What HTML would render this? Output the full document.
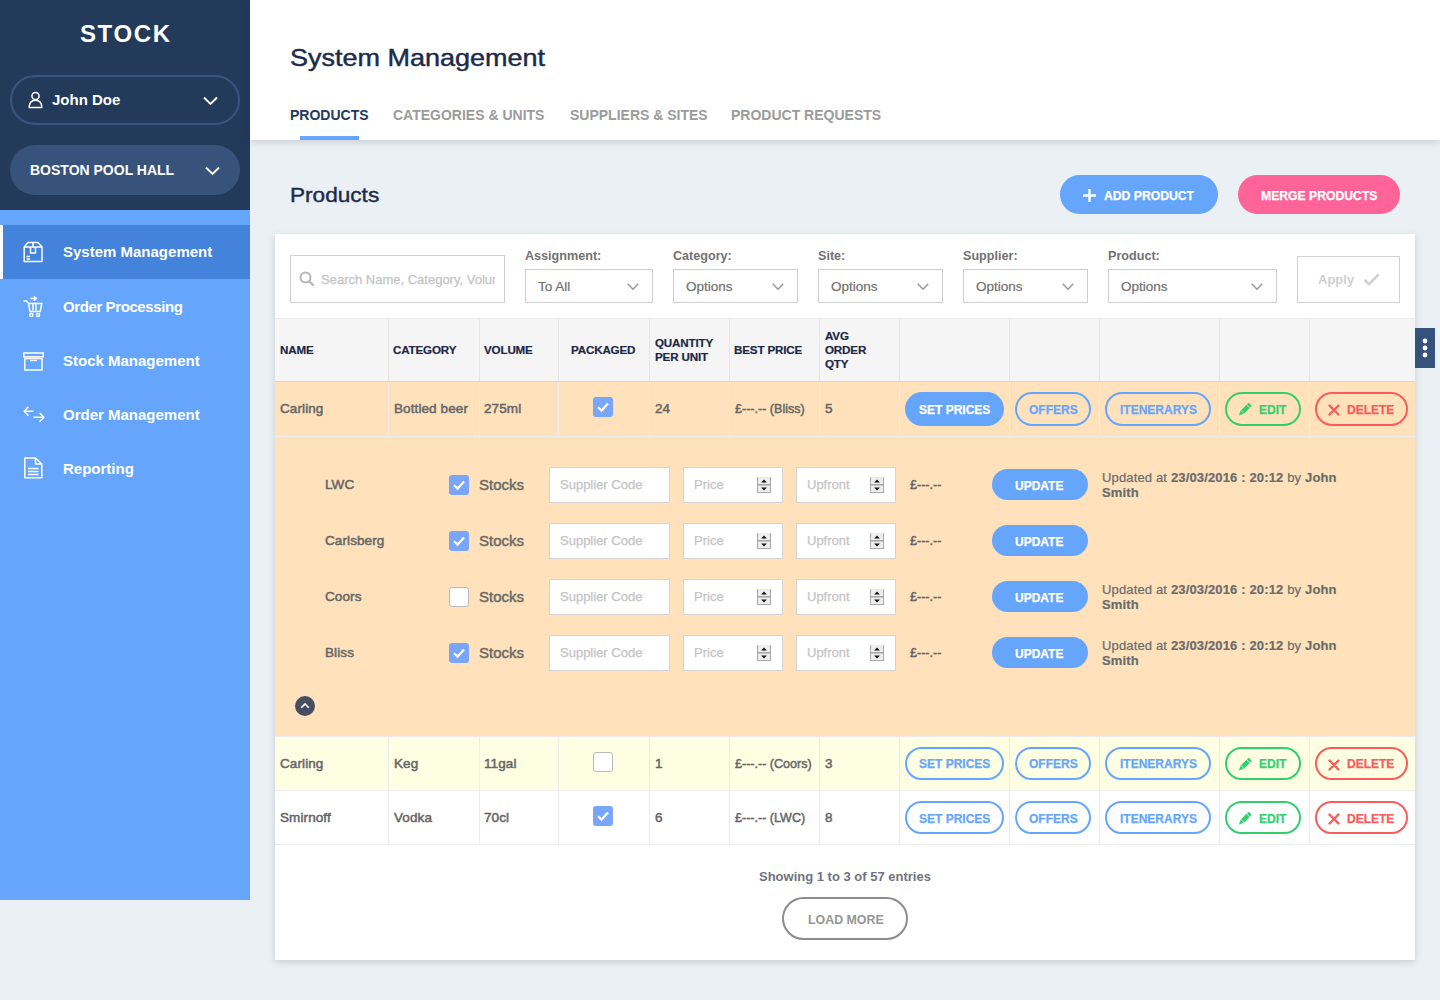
<!DOCTYPE html>
<html><head><meta charset="utf-8">
<style>
*{box-sizing:border-box;margin:0;padding:0}
html,body{width:1440px;height:1000px;overflow:hidden;background:#ebf0f5;font-family:"Liberation Sans",sans-serif}
.a{position:absolute}
.t{position:absolute;line-height:1;white-space:nowrap}
.b{font-weight:bold}
.pill{border-radius:25px}
.nav{color:#fff;font-size:15px;font-weight:bold}
.tab{font-size:14px;font-weight:bold;color:#9b9b9b}
.lbl{font-size:13px;font-weight:bold;color:#727272}
.sel{position:absolute;border:1px solid #cfcfcf;background:#fff;height:34px;top:269px}
.opt{font-size:13.5px;color:#707070;-webkit-text-stroke:0.2px #707070}
.th{font-size:11.6px;font-weight:bold;color:#1c2746;letter-spacing:-0.15px;-webkit-text-stroke:0.2px #1c2746}
.vl{position:absolute;width:1px}
.rt{font-size:13.5px;color:#666;-webkit-text-stroke:0.5px #666;letter-spacing:0.1px}
.pr{letter-spacing:0;transform:scaleX(0.93);transform-origin:0 0}
.ob{position:absolute;border:2px solid #65a6fc;border-radius:17px}
.bt{font-size:12px;font-weight:bold;-webkit-text-stroke:0.25px currentColor}
.inp{position:absolute;background:#fff;border:1px solid #d3d3d3;height:36px}
.ph{font-size:13px;color:#c4c4c4;-webkit-text-stroke:0.25px #c4c4c4}
.spin{position:absolute;width:14px;height:17px;background:#ececec;border:1px solid #a9a9a9}
.upd{position:absolute;width:270px;font-size:13px;line-height:15px;color:#6b6b6b;-webkit-text-stroke:0.2px #6b6b6b;letter-spacing:0.15px}
</style></head>
<body>
<div class="a" style="left:0;top:0;width:250px;height:900px;background:#65a6fc"></div>
<div class="a" style="left:0;top:0;width:250px;height:210px;background:#243a5b"></div>
<div class="t b" style="left:80px;top:21.7px;font-size:24px;letter-spacing:1.6px;color:#fff">STOCK</div>
<div class="a pill" style="left:10px;top:75px;width:230px;height:50px;border:2px solid #3a557e"></div>
<div class="t b" style="left:52px;top:92.3px;font-size:15px;color:#fff">John Doe</div>
<div class="a pill" style="left:10px;top:145px;width:230px;height:50px;background:#37537b"></div>
<div class="t b" style="left:30px;top:162.9px;font-size:14px;color:#fff">BOSTON POOL HALL</div>
<svg class="a" style="left:28px;top:91px" width="15" height="18" viewBox="0 0 15 18"><circle cx="7.5" cy="5" r="3.6" fill="none" stroke="#fff" stroke-width="1.5"/><path d="M1.2 16.6 C1.2 11.5 3.8 9.2 7.5 9.2 C11.2 9.2 13.8 11.5 13.8 16.6 Z" fill="none" stroke="#fff" stroke-width="1.5" stroke-linejoin="round"/></svg>
<svg class="a" style="left:203px;top:96px" width="15" height="10" viewBox="0 0 15 10"><path d="M1 1.5 L7.5 8 L14 1.5" fill="none" stroke="#fff" stroke-width="1.9"/></svg>
<svg class="a" style="left:205px;top:166px" width="15" height="10" viewBox="0 0 15 10"><path d="M1 1.5 L7.5 8 L14 1.5" fill="none" stroke="#fff" stroke-width="1.9"/></svg>
<div class="a" style="left:0;top:225px;width:250px;height:54px;background:#4483dc"></div>
<div class="a" style="left:0;top:225px;width:3px;height:54px;background:#fff"></div>
<div class="t nav" style="left:63px;top:244.0px;font-size:15px;letter-spacing:0">System Management</div>
<div class="t nav" style="left:63px;top:298.5px;font-size:15px;letter-spacing:-0.4px">Order Processing</div>
<div class="t nav" style="left:63px;top:352.5px;font-size:15px;letter-spacing:0">Stock Management</div>
<div class="t nav" style="left:63px;top:406.5px;font-size:15px;letter-spacing:0">Order Management</div>
<div class="t nav" style="left:63px;top:460.5px;font-size:15px;letter-spacing:0">Reporting</div>
<svg class="a" style="left:23px;top:241px" width="20" height="22" viewBox="0 0 20 22"><g fill="none" stroke="#fff" stroke-width="1.5" stroke-linejoin="round"><path d="M5 1.5 H15 L19 6 V20.5 H1.2 V6 Z"/><path d="M1.2 6 H19"/><path d="M10 1.5 V6"/><path d="M7.5 6 V12 H12.5 V6"/></g><path d="M3.5 15.5 H7 M3.5 18 H7" stroke="#fff" stroke-width="1.3"/></svg>
<svg class="a" style="left:23px;top:296px" width="21" height="22" viewBox="0 0 21 22"><g fill="none" stroke="#fff" stroke-width="1.5" stroke-linejoin="round" stroke-linecap="round"><path d="M1 5 H3.5 L5.5 7.5 L7 15.5 H17.2 L18.8 7.5 H5.5"/><path d="M10 8.5 V14 M13 8.5 V14"/><circle cx="8.3" cy="19" r="1.6"/><circle cx="15" cy="19" r="1.6"/><path d="M8 2.5 H13.5 M11.3 0.8 L13.6 2.5 L11.3 4.2"/></g></svg>
<svg class="a" style="left:23px;top:352px" width="21" height="19" viewBox="0 0 21 19"><g fill="none" stroke="#fff" stroke-width="1.5"><rect x="0.8" y="1" width="19.4" height="3.8"/><rect x="1.8" y="6.5" width="17.2" height="11.5"/></g><path d="M7 8.5 H14" stroke="#fff" stroke-width="1.4"/></svg>
<svg class="a" style="left:23px;top:406px" width="22" height="17" viewBox="0 0 22 17"><g fill="none" stroke="#fff" stroke-width="1.5" stroke-linecap="round" stroke-linejoin="round"><path d="M1.2 5.2 H10 M5 1.2 L1.2 5.2 L5 9.2"/><path d="M11 11.2 H20.8 M17 7.2 L20.8 11.2 L17 15.2"/></g></svg>
<svg class="a" style="left:23px;top:457px" width="20" height="22" viewBox="0 0 20 22"><g fill="none" stroke="#fff" stroke-width="1.5" stroke-linejoin="round"><path d="M1.8 1 H12.5 L18.8 7 V20.8 H1.8 Z"/><path d="M12.5 1 V7 H18.8"/></g><path d="M5 11.5 H15.5 M5 14.5 H15.5 M5 17.5 H15.5" stroke="#fff" stroke-width="1.4"/></svg>
<div class="a" style="left:250px;top:0;width:1190px;height:140px;background:#fff;box-shadow:0 2px 8px rgba(0,0,0,.15)"></div>
<div class="t " style="left:290px;top:46.1px;font-size:24px;transform:scaleX(1.125);transform-origin:0 0;color:#1d2b4a;-webkit-text-stroke:0.45px #1d2b4a">System Management</div>
<div class="t tab" style="left:290px;top:108.1px;font-size:14px;color:#233a5a">PRODUCTS</div>
<div class="a" style="left:300px;top:136px;width:59px;height:4px;background:#65a6fc"></div>
<div class="t tab" style="left:393px;top:108.1px;font-size:14px;">CATEGORIES &amp; UNITS</div>
<div class="t tab" style="left:570px;top:108.1px;font-size:14px;">SUPPLIERS &amp; SITES</div>
<div class="t tab" style="left:731px;top:108.1px;font-size:14px;">PRODUCT REQUESTS</div>
<div class="t " style="left:290px;top:185.1px;font-size:20px;transform:scaleX(1.13);transform-origin:0 0;color:#1d2b4a;-webkit-text-stroke:0.4px #1d2b4a">Products</div>
<div class="a" style="left:1060px;top:175px;width:158px;height:39px;border-radius:20px;background:#65a6fc"></div>
<svg class="a" style="left:1083px;top:189px" width="13" height="13" viewBox="0 0 13 13"><path d="M6.5 0 V13 M0 6.5 H13" stroke="#fff" stroke-width="2.4"/></svg>
<div class="t bt" style="left:1104px;top:190.3px;font-size:12.2px;color:#fff">ADD PRODUCT</div>
<div class="a" style="left:1238px;top:175px;width:162px;height:39px;border-radius:20px;background:#fe6497"></div>
<div class="t bt" style="left:1261px;top:190.3px;font-size:12.2px;color:#fff">MERGE PRODUCTS</div>
<div class="a" style="left:275px;top:234px;width:1140px;height:726px;background:#fff;box-shadow:0 2px 7px rgba(0,0,0,.15)"></div>
<div class="a" style="left:290px;top:255px;width:215px;height:48px;border:1px solid #cfcfcf"></div>
<svg class="a" style="left:299px;top:271px" width="16" height="16" viewBox="0 0 16 16"><circle cx="6.5" cy="6.5" r="5" fill="none" stroke="#b5b5b5" stroke-width="2"/><path d="M10.2 10.2 L14.2 14.2" stroke="#b5b5b5" stroke-width="2.2" stroke-linecap="round"/></svg>
<div class="a" style="left:321px;top:272px;width:174px;height:18px;overflow:hidden"><div class="t ph" style="left:0;top:1px">Search Name, Category, Volume</div></div>
<div class="t lbl" style="left:525px;top:249.7px;font-size:12.6px;">Assignment:</div>
<div class="sel" style="left:525px;width:128px"></div>
<div class="t opt" style="left:538px;top:279.9px;font-size:13.5px;">To All</div>
<svg class="a" style="left:627px;top:283px" width="12" height="7" viewBox="0 0 12 7"><path d="M0.75 0.75 L6.0 6.25 L11.25 0.75" fill="none" stroke="#9a9a9a" stroke-width="1.5"/></svg>
<div class="t lbl" style="left:673px;top:249.7px;font-size:12.6px;">Category:</div>
<div class="sel" style="left:673px;width:125px"></div>
<div class="t opt" style="left:686px;top:279.9px;font-size:13.5px;">Options</div>
<svg class="a" style="left:772px;top:283px" width="12" height="7" viewBox="0 0 12 7"><path d="M0.75 0.75 L6.0 6.25 L11.25 0.75" fill="none" stroke="#9a9a9a" stroke-width="1.5"/></svg>
<div class="t lbl" style="left:818px;top:249.7px;font-size:12.6px;">Site:</div>
<div class="sel" style="left:818px;width:125px"></div>
<div class="t opt" style="left:831px;top:279.9px;font-size:13.5px;">Options</div>
<svg class="a" style="left:917px;top:283px" width="12" height="7" viewBox="0 0 12 7"><path d="M0.75 0.75 L6.0 6.25 L11.25 0.75" fill="none" stroke="#9a9a9a" stroke-width="1.5"/></svg>
<div class="t lbl" style="left:963px;top:249.7px;font-size:12.6px;">Supplier:</div>
<div class="sel" style="left:963px;width:125px"></div>
<div class="t opt" style="left:976px;top:279.9px;font-size:13.5px;">Options</div>
<svg class="a" style="left:1062px;top:283px" width="12" height="7" viewBox="0 0 12 7"><path d="M0.75 0.75 L6.0 6.25 L11.25 0.75" fill="none" stroke="#9a9a9a" stroke-width="1.5"/></svg>
<div class="t lbl" style="left:1108px;top:249.7px;font-size:12.6px;">Product:</div>
<div class="sel" style="left:1108px;width:169px"></div>
<div class="t opt" style="left:1121px;top:279.9px;font-size:13.5px;">Options</div>
<svg class="a" style="left:1251px;top:283px" width="12" height="7" viewBox="0 0 12 7"><path d="M0.75 0.75 L6.0 6.25 L11.25 0.75" fill="none" stroke="#9a9a9a" stroke-width="1.5"/></svg>
<div class="a" style="left:1297px;top:256px;width:103px;height:47px;border:1px solid #d2d2d2"></div>
<div class="t b" style="left:1318px;top:273.2px;font-size:13px;color:#d0d0d0">Apply</div>
<svg class="a" style="left:1363px;top:273px" width="17" height="13" viewBox="0 0 17 13"><path d="M1.5 7 L6 11.2 L15.5 1.5" fill="none" stroke="#d0d0d0" stroke-width="2.6"/></svg>
<div class="a" style="left:275px;top:318px;width:1140px;height:63px;background:#f5f5f5;border-top:1px solid #ededed"></div>
<div class="vl" style="left:388px;top:319px;height:62px;background:#e6e6e6"></div>
<div class="vl" style="left:479px;top:319px;height:62px;background:#e6e6e6"></div>
<div class="vl" style="left:558px;top:319px;height:62px;background:#e6e6e6"></div>
<div class="vl" style="left:649px;top:319px;height:62px;background:#e6e6e6"></div>
<div class="vl" style="left:729px;top:319px;height:62px;background:#e6e6e6"></div>
<div class="vl" style="left:819px;top:319px;height:62px;background:#e6e6e6"></div>
<div class="vl" style="left:899px;top:319px;height:62px;background:#e6e6e6"></div>
<div class="vl" style="left:1009px;top:319px;height:62px;background:#e6e6e6"></div>
<div class="vl" style="left:1099px;top:319px;height:62px;background:#e6e6e6"></div>
<div class="vl" style="left:1219px;top:319px;height:62px;background:#e6e6e6"></div>
<div class="vl" style="left:1309px;top:319px;height:62px;background:#e6e6e6"></div>
<div class="t th" style="left:280px;top:343.8px;font-size:11.6px;">NAME</div>
<div class="t th" style="left:393px;top:343.8px;font-size:11.6px;">CATEGORY</div>
<div class="t th" style="left:484px;top:343.8px;font-size:11.6px;">VOLUME</div>
<div class="t th" style="left:571px;top:343.8px;font-size:11.6px;">PACKAGED</div>
<div class="t th" style="left:655px;top:337.2px;font-size:11.6px;">QUANTITY</div>
<div class="t th" style="left:655px;top:351.2px;font-size:11.6px;">PER UNIT</div>
<div class="t th" style="left:734px;top:343.8px;font-size:11.6px;">BEST PRICE</div>
<div class="t th" style="left:825px;top:330.2px;font-size:11.6px;">AVG</div>
<div class="t th" style="left:825px;top:344.2px;font-size:11.6px;">ORDER</div>
<div class="t th" style="left:825px;top:358.2px;font-size:11.6px;">QTY</div>
<div class="a" style="left:275px;top:381px;width:1140px;height:1px;background:#d6d6d6"></div>
<div class="a" style="left:275px;top:382px;width:1140px;height:354px;background:#ffe2bc"></div>
<div class="a" style="left:275px;top:436px;width:1140px;height:1px;background:#ececec"></div>
<div class="a" style="left:275px;top:736px;width:1140px;height:1px;background:#ececec"></div>
<div class="a" style="left:275px;top:737px;width:1140px;height:53px;background:#fefee3"></div>
<div class="a" style="left:275px;top:790px;width:1140px;height:1px;background:#ececec"></div>
<div class="a" style="left:275px;top:844px;width:1140px;height:1px;background:#ececec"></div>
<div class="vl" style="left:388px;top:382px;height:54px;background:#ececec"></div>
<div class="vl" style="left:479px;top:382px;height:54px;background:#ececec"></div>
<div class="vl" style="left:558px;top:382px;height:54px;background:#ececec"></div>
<div class="vl" style="left:649px;top:382px;height:54px;background:#ececec"></div>
<div class="vl" style="left:729px;top:382px;height:54px;background:#ececec"></div>
<div class="vl" style="left:819px;top:382px;height:54px;background:#ececec"></div>
<div class="vl" style="left:899px;top:382px;height:54px;background:#ececec"></div>
<div class="vl" style="left:1009px;top:382px;height:54px;background:#ececec"></div>
<div class="vl" style="left:1099px;top:382px;height:54px;background:#ececec"></div>
<div class="vl" style="left:1219px;top:382px;height:54px;background:#ececec"></div>
<div class="vl" style="left:1309px;top:382px;height:54px;background:#ececec"></div>
<div class="vl" style="left:388px;top:737px;height:53px;background:#ececec"></div>
<div class="vl" style="left:479px;top:737px;height:53px;background:#ececec"></div>
<div class="vl" style="left:558px;top:737px;height:53px;background:#ececec"></div>
<div class="vl" style="left:649px;top:737px;height:53px;background:#ececec"></div>
<div class="vl" style="left:729px;top:737px;height:53px;background:#ececec"></div>
<div class="vl" style="left:819px;top:737px;height:53px;background:#ececec"></div>
<div class="vl" style="left:899px;top:737px;height:53px;background:#ececec"></div>
<div class="vl" style="left:1009px;top:737px;height:53px;background:#ececec"></div>
<div class="vl" style="left:1099px;top:737px;height:53px;background:#ececec"></div>
<div class="vl" style="left:1219px;top:737px;height:53px;background:#ececec"></div>
<div class="vl" style="left:1309px;top:737px;height:53px;background:#ececec"></div>
<div class="vl" style="left:388px;top:791px;height:53px;background:#ececec"></div>
<div class="vl" style="left:479px;top:791px;height:53px;background:#ececec"></div>
<div class="vl" style="left:558px;top:791px;height:53px;background:#ececec"></div>
<div class="vl" style="left:649px;top:791px;height:53px;background:#ececec"></div>
<div class="vl" style="left:729px;top:791px;height:53px;background:#ececec"></div>
<div class="vl" style="left:819px;top:791px;height:53px;background:#ececec"></div>
<div class="vl" style="left:899px;top:791px;height:53px;background:#ececec"></div>
<div class="vl" style="left:1009px;top:791px;height:53px;background:#ececec"></div>
<div class="vl" style="left:1099px;top:791px;height:53px;background:#ececec"></div>
<div class="vl" style="left:1219px;top:791px;height:53px;background:#ececec"></div>
<div class="vl" style="left:1309px;top:791px;height:53px;background:#ececec"></div>
<div class="t rt" style="left:280px;top:401.9px;font-size:13.5px;">Carling</div>
<div class="t rt" style="left:394px;top:401.9px;font-size:13.5px;">Bottled beer</div>
<div class="t rt" style="left:484px;top:401.9px;font-size:13.5px;">275ml</div>
<div class="a" style="left:593px;top:397px;width:20px;height:20px;border-radius:3px;background:#79a6f8"></div>
<svg class="a" style="left:593px;top:397px" width="20" height="20" viewBox="0 0 20 20"><path d="M5 10.2 L8.6 13.6 L15 6.6" fill="none" stroke="#fff" stroke-width="2.2"/></svg>
<div class="t rt" style="left:655px;top:401.9px;font-size:13.5px;">24</div>
<div class="t rt pr" style="left:735px;top:401.9px;font-size:13.5px;">£---.-- (Bliss)</div>
<div class="t rt" style="left:825px;top:401.9px;font-size:13.5px;">5</div>
<div class="a" style="left:905px;top:392px;width:99px;height:34px;border-radius:17px;background:#65a6fc"></div>
<div class="t bt" style="left:919px;top:404.0px;font-size:12px;color:#fff">SET PRICES</div>
<div class="ob" style="left:1015px;top:392px;width:76px;height:34px"></div>
<div class="t bt" style="left:1029px;top:404.0px;font-size:12px;color:#65a6fc">OFFERS</div>
<div class="ob" style="left:1105px;top:392px;width:106px;height:34px"></div>
<div class="t bt" style="left:1120px;top:404.0px;font-size:12px;color:#65a6fc">ITENERARYS</div>
<div class="ob" style="left:1225px;top:392px;width:76px;height:34px;border-color:#33cf6f"></div>
<svg class="a" style="left:1238px;top:403px" width="14" height="14" viewBox="0 0 14 14"><g transform="translate(6.6,6.9) rotate(45)" fill="#33cf6f"><rect x="-2.3" y="-8" width="4.6" height="2.4" rx="0.6"/><rect x="-2.3" y="-4.9" width="4.6" height="7.6"/><path d="M-2.3 3.3 H2.3 L0 8 Z"/></g></svg>
<div class="t bt" style="left:1259px;top:404.0px;font-size:12px;color:#33cf6f">EDIT</div>
<div class="ob" style="left:1315px;top:392px;width:93px;height:34px;border-color:#fa5b5b"></div>
<svg class="a" style="left:1328px;top:404px" width="12" height="12" viewBox="0 0 12 12"><path d="M1.5 1.5 L10.5 10.5 M10.5 1.5 L1.5 10.5" stroke="#fa5b5b" stroke-width="2.4" stroke-linecap="round"/></svg>
<div class="t bt" style="left:1347px;top:404.0px;font-size:12px;color:#fa5b5b">DELETE</div>
<div class="t rt" style="left:280px;top:756.9px;font-size:13.5px;">Carling</div>
<div class="t rt" style="left:394px;top:756.9px;font-size:13.5px;">Keg</div>
<div class="t rt" style="left:484px;top:756.9px;font-size:13.5px;">11gal</div>
<div class="a" style="left:593px;top:752px;width:20px;height:20px;border-radius:3px;background:#fff;border:1px solid #b9b9b9"></div>
<div class="t rt" style="left:655px;top:756.9px;font-size:13.5px;">1</div>
<div class="t rt pr" style="left:735px;top:756.9px;font-size:13.5px;">£---.-- (Coors)</div>
<div class="t rt" style="left:825px;top:756.9px;font-size:13.5px;">3</div>
<div class="ob" style="left:905px;top:747px;width:99px;height:33px"></div>
<div class="t bt" style="left:919px;top:758.0px;font-size:12px;color:#65a6fc">SET PRICES</div>
<div class="ob" style="left:1015px;top:747px;width:76px;height:33px"></div>
<div class="t bt" style="left:1029px;top:758.0px;font-size:12px;color:#65a6fc">OFFERS</div>
<div class="ob" style="left:1105px;top:747px;width:106px;height:33px"></div>
<div class="t bt" style="left:1120px;top:758.0px;font-size:12px;color:#65a6fc">ITENERARYS</div>
<div class="ob" style="left:1225px;top:747px;width:76px;height:33px;border-color:#33cf6f"></div>
<svg class="a" style="left:1238px;top:758px" width="14" height="14" viewBox="0 0 14 14"><g transform="translate(6.6,6.9) rotate(45)" fill="#33cf6f"><rect x="-2.3" y="-8" width="4.6" height="2.4" rx="0.6"/><rect x="-2.3" y="-4.9" width="4.6" height="7.6"/><path d="M-2.3 3.3 H2.3 L0 8 Z"/></g></svg>
<div class="t bt" style="left:1259px;top:758.0px;font-size:12px;color:#33cf6f">EDIT</div>
<div class="ob" style="left:1315px;top:747px;width:93px;height:33px;border-color:#fa5b5b"></div>
<svg class="a" style="left:1328px;top:759px" width="12" height="12" viewBox="0 0 12 12"><path d="M1.5 1.5 L10.5 10.5 M10.5 1.5 L1.5 10.5" stroke="#fa5b5b" stroke-width="2.4" stroke-linecap="round"/></svg>
<div class="t bt" style="left:1347px;top:758.0px;font-size:12px;color:#fa5b5b">DELETE</div>
<div class="t rt" style="left:280px;top:810.9px;font-size:13.5px;">Smirnoff</div>
<div class="t rt" style="left:394px;top:810.9px;font-size:13.5px;">Vodka</div>
<div class="t rt" style="left:484px;top:810.9px;font-size:13.5px;">70cl</div>
<div class="a" style="left:593px;top:806px;width:20px;height:20px;border-radius:3px;background:#79a6f8"></div>
<svg class="a" style="left:593px;top:806px" width="20" height="20" viewBox="0 0 20 20"><path d="M5 10.2 L8.6 13.6 L15 6.6" fill="none" stroke="#fff" stroke-width="2.2"/></svg>
<div class="t rt" style="left:655px;top:810.9px;font-size:13.5px;">6</div>
<div class="t rt pr" style="left:735px;top:810.9px;font-size:13.5px;">£---.-- (LWC)</div>
<div class="t rt" style="left:825px;top:810.9px;font-size:13.5px;">8</div>
<div class="ob" style="left:905px;top:801px;width:99px;height:33px"></div>
<div class="t bt" style="left:919px;top:813.0px;font-size:12px;color:#65a6fc">SET PRICES</div>
<div class="ob" style="left:1015px;top:801px;width:76px;height:33px"></div>
<div class="t bt" style="left:1029px;top:813.0px;font-size:12px;color:#65a6fc">OFFERS</div>
<div class="ob" style="left:1105px;top:801px;width:106px;height:33px"></div>
<div class="t bt" style="left:1120px;top:813.0px;font-size:12px;color:#65a6fc">ITENERARYS</div>
<div class="ob" style="left:1225px;top:801px;width:76px;height:33px;border-color:#33cf6f"></div>
<svg class="a" style="left:1238px;top:812px" width="14" height="14" viewBox="0 0 14 14"><g transform="translate(6.6,6.9) rotate(45)" fill="#33cf6f"><rect x="-2.3" y="-8" width="4.6" height="2.4" rx="0.6"/><rect x="-2.3" y="-4.9" width="4.6" height="7.6"/><path d="M-2.3 3.3 H2.3 L0 8 Z"/></g></svg>
<div class="t bt" style="left:1259px;top:813.0px;font-size:12px;color:#33cf6f">EDIT</div>
<div class="ob" style="left:1315px;top:801px;width:93px;height:33px;border-color:#fa5b5b"></div>
<svg class="a" style="left:1328px;top:813px" width="12" height="12" viewBox="0 0 12 12"><path d="M1.5 1.5 L10.5 10.5 M10.5 1.5 L1.5 10.5" stroke="#fa5b5b" stroke-width="2.4" stroke-linecap="round"/></svg>
<div class="t bt" style="left:1347px;top:813.0px;font-size:12px;color:#fa5b5b">DELETE</div>
<div class="t rt" style="left:325px;top:477.6px;font-size:13.5px;">LWC</div>
<div class="a" style="left:449px;top:475px;width:20px;height:20px;border-radius:3px;background:#79a6f8"></div>
<svg class="a" style="left:449px;top:475px" width="20" height="20" viewBox="0 0 20 20"><path d="M5 10.2 L8.6 13.6 L15 6.6" fill="none" stroke="#fff" stroke-width="2.2"/></svg>
<div class="t rt" style="left:479px;top:476.9px;font-size:15px;-webkit-text-stroke:0.45px #6b6b6b;letter-spacing:0">Stocks</div>
<div class="inp" style="left:549px;top:467px;width:121px"></div>
<div class="t ph" style="left:560px;top:478.0px;font-size:13px;">Supplier Code</div>
<div class="inp" style="left:683px;top:467px;width:100px"></div>
<div class="t ph" style="left:694px;top:478.0px;font-size:13px;">Price</div>
<div class="a" style="left:757px;top:477px;width:14px;height:16px;background:#ededed;border:1px solid #a9a9a9;border-top:none"></div>
<svg class="a" style="left:757px;top:477px" width="14" height="16" viewBox="0 0 14 16"><path d="M4.2 5.6 L7 2.4 L9.8 5.6 Z M4.2 10.4 H9.8 L7 13.6 Z" fill="#111"/><rect x="0" y="7" width="14" height="1.6" fill="#a9a9a9"/></svg>
<div class="inp" style="left:796px;top:467px;width:100px"></div>
<div class="t ph" style="left:807px;top:478.0px;font-size:13px;">Upfront</div>
<div class="a" style="left:870px;top:477px;width:14px;height:16px;background:#ededed;border:1px solid #a9a9a9;border-top:none"></div>
<svg class="a" style="left:870px;top:477px" width="14" height="16" viewBox="0 0 14 16"><path d="M4.2 5.6 L7 2.4 L9.8 5.6 Z M4.2 10.4 H9.8 L7 13.6 Z" fill="#111"/><rect x="0" y="7" width="14" height="1.6" fill="#a9a9a9"/></svg>
<div class="t rt pr" style="left:910px;top:477.6px;font-size:13.5px;">£---.--</div>
<div class="a" style="left:992px;top:469px;width:96px;height:31px;border-radius:16px;background:#65a6fc"></div>
<div class="t bt" style="left:1015px;top:480.3px;font-size:12px;color:#fff">UPDATE</div>
<div class="upd" style="left:1102px;top:470px">Updated at <b>23/03/2016 : 20:12</b> by <b>John Smith</b></div>
<div class="t rt" style="left:325px;top:533.6px;font-size:13.5px;">Carlsberg</div>
<div class="a" style="left:449px;top:531px;width:20px;height:20px;border-radius:3px;background:#79a6f8"></div>
<svg class="a" style="left:449px;top:531px" width="20" height="20" viewBox="0 0 20 20"><path d="M5 10.2 L8.6 13.6 L15 6.6" fill="none" stroke="#fff" stroke-width="2.2"/></svg>
<div class="t rt" style="left:479px;top:532.9px;font-size:15px;-webkit-text-stroke:0.45px #6b6b6b;letter-spacing:0">Stocks</div>
<div class="inp" style="left:549px;top:523px;width:121px"></div>
<div class="t ph" style="left:560px;top:534.0px;font-size:13px;">Supplier Code</div>
<div class="inp" style="left:683px;top:523px;width:100px"></div>
<div class="t ph" style="left:694px;top:534.0px;font-size:13px;">Price</div>
<div class="a" style="left:757px;top:533px;width:14px;height:16px;background:#ededed;border:1px solid #a9a9a9;border-top:none"></div>
<svg class="a" style="left:757px;top:533px" width="14" height="16" viewBox="0 0 14 16"><path d="M4.2 5.6 L7 2.4 L9.8 5.6 Z M4.2 10.4 H9.8 L7 13.6 Z" fill="#111"/><rect x="0" y="7" width="14" height="1.6" fill="#a9a9a9"/></svg>
<div class="inp" style="left:796px;top:523px;width:100px"></div>
<div class="t ph" style="left:807px;top:534.0px;font-size:13px;">Upfront</div>
<div class="a" style="left:870px;top:533px;width:14px;height:16px;background:#ededed;border:1px solid #a9a9a9;border-top:none"></div>
<svg class="a" style="left:870px;top:533px" width="14" height="16" viewBox="0 0 14 16"><path d="M4.2 5.6 L7 2.4 L9.8 5.6 Z M4.2 10.4 H9.8 L7 13.6 Z" fill="#111"/><rect x="0" y="7" width="14" height="1.6" fill="#a9a9a9"/></svg>
<div class="t rt pr" style="left:910px;top:533.6px;font-size:13.5px;">£---.--</div>
<div class="a" style="left:992px;top:525px;width:96px;height:31px;border-radius:16px;background:#65a6fc"></div>
<div class="t bt" style="left:1015px;top:536.3px;font-size:12px;color:#fff">UPDATE</div>
<div class="t rt" style="left:325px;top:589.6px;font-size:13.5px;">Coors</div>
<div class="a" style="left:449px;top:587px;width:20px;height:20px;border-radius:3px;background:#fff;border:1px solid #b9b9b9"></div>
<div class="t rt" style="left:479px;top:588.9px;font-size:15px;-webkit-text-stroke:0.45px #6b6b6b;letter-spacing:0">Stocks</div>
<div class="inp" style="left:549px;top:579px;width:121px"></div>
<div class="t ph" style="left:560px;top:590.0px;font-size:13px;">Supplier Code</div>
<div class="inp" style="left:683px;top:579px;width:100px"></div>
<div class="t ph" style="left:694px;top:590.0px;font-size:13px;">Price</div>
<div class="a" style="left:757px;top:589px;width:14px;height:16px;background:#ededed;border:1px solid #a9a9a9;border-top:none"></div>
<svg class="a" style="left:757px;top:589px" width="14" height="16" viewBox="0 0 14 16"><path d="M4.2 5.6 L7 2.4 L9.8 5.6 Z M4.2 10.4 H9.8 L7 13.6 Z" fill="#111"/><rect x="0" y="7" width="14" height="1.6" fill="#a9a9a9"/></svg>
<div class="inp" style="left:796px;top:579px;width:100px"></div>
<div class="t ph" style="left:807px;top:590.0px;font-size:13px;">Upfront</div>
<div class="a" style="left:870px;top:589px;width:14px;height:16px;background:#ededed;border:1px solid #a9a9a9;border-top:none"></div>
<svg class="a" style="left:870px;top:589px" width="14" height="16" viewBox="0 0 14 16"><path d="M4.2 5.6 L7 2.4 L9.8 5.6 Z M4.2 10.4 H9.8 L7 13.6 Z" fill="#111"/><rect x="0" y="7" width="14" height="1.6" fill="#a9a9a9"/></svg>
<div class="t rt pr" style="left:910px;top:589.6px;font-size:13.5px;">£---.--</div>
<div class="a" style="left:992px;top:581px;width:96px;height:31px;border-radius:16px;background:#65a6fc"></div>
<div class="t bt" style="left:1015px;top:592.3px;font-size:12px;color:#fff">UPDATE</div>
<div class="upd" style="left:1102px;top:582px">Updated at <b>23/03/2016 : 20:12</b> by <b>John Smith</b></div>
<div class="t rt" style="left:325px;top:645.6px;font-size:13.5px;">Bliss</div>
<div class="a" style="left:449px;top:643px;width:20px;height:20px;border-radius:3px;background:#79a6f8"></div>
<svg class="a" style="left:449px;top:643px" width="20" height="20" viewBox="0 0 20 20"><path d="M5 10.2 L8.6 13.6 L15 6.6" fill="none" stroke="#fff" stroke-width="2.2"/></svg>
<div class="t rt" style="left:479px;top:644.9px;font-size:15px;-webkit-text-stroke:0.45px #6b6b6b;letter-spacing:0">Stocks</div>
<div class="inp" style="left:549px;top:635px;width:121px"></div>
<div class="t ph" style="left:560px;top:646.0px;font-size:13px;">Supplier Code</div>
<div class="inp" style="left:683px;top:635px;width:100px"></div>
<div class="t ph" style="left:694px;top:646.0px;font-size:13px;">Price</div>
<div class="a" style="left:757px;top:645px;width:14px;height:16px;background:#ededed;border:1px solid #a9a9a9;border-top:none"></div>
<svg class="a" style="left:757px;top:645px" width="14" height="16" viewBox="0 0 14 16"><path d="M4.2 5.6 L7 2.4 L9.8 5.6 Z M4.2 10.4 H9.8 L7 13.6 Z" fill="#111"/><rect x="0" y="7" width="14" height="1.6" fill="#a9a9a9"/></svg>
<div class="inp" style="left:796px;top:635px;width:100px"></div>
<div class="t ph" style="left:807px;top:646.0px;font-size:13px;">Upfront</div>
<div class="a" style="left:870px;top:645px;width:14px;height:16px;background:#ededed;border:1px solid #a9a9a9;border-top:none"></div>
<svg class="a" style="left:870px;top:645px" width="14" height="16" viewBox="0 0 14 16"><path d="M4.2 5.6 L7 2.4 L9.8 5.6 Z M4.2 10.4 H9.8 L7 13.6 Z" fill="#111"/><rect x="0" y="7" width="14" height="1.6" fill="#a9a9a9"/></svg>
<div class="t rt pr" style="left:910px;top:645.6px;font-size:13.5px;">£---.--</div>
<div class="a" style="left:992px;top:637px;width:96px;height:31px;border-radius:16px;background:#65a6fc"></div>
<div class="t bt" style="left:1015px;top:648.3px;font-size:12px;color:#fff">UPDATE</div>
<div class="upd" style="left:1102px;top:638px">Updated at <b>23/03/2016 : 20:12</b> by <b>John Smith</b></div>
<div class="a" style="left:295px;top:696px;width:20px;height:20px;border-radius:50%;background:#464e62"></div>
<svg class="a" style="left:295px;top:696px" width="20" height="20" viewBox="0 0 20 20"><path d="M6.2 11.8 L10 8 L13.8 11.8" fill="none" stroke="#fff" stroke-width="1.6"/></svg>
<div class="t b" style="left:759px;top:870.0px;font-size:13px;color:#6f7380">Showing 1 to 3 of 57 entries</div>
<div class="a" style="left:782px;top:897px;width:126px;height:43px;border:2px solid #8c8c8c;border-radius:22px"></div>
<div class="t b" style="left:808px;top:913.9px;font-size:12.4px;color:#969696">LOAD MORE</div>
<div class="a" style="left:1415px;top:328px;width:20px;height:40px;background:#35527d"></div>
<svg class="a" style="left:1415px;top:328px" width="20" height="40" viewBox="0 0 20 40"><circle cx="10" cy="13" r="2.4" fill="#fff"/><circle cx="10" cy="20" r="2.4" fill="#fff"/><circle cx="10" cy="27" r="2.4" fill="#fff"/></svg>
</body></html>
